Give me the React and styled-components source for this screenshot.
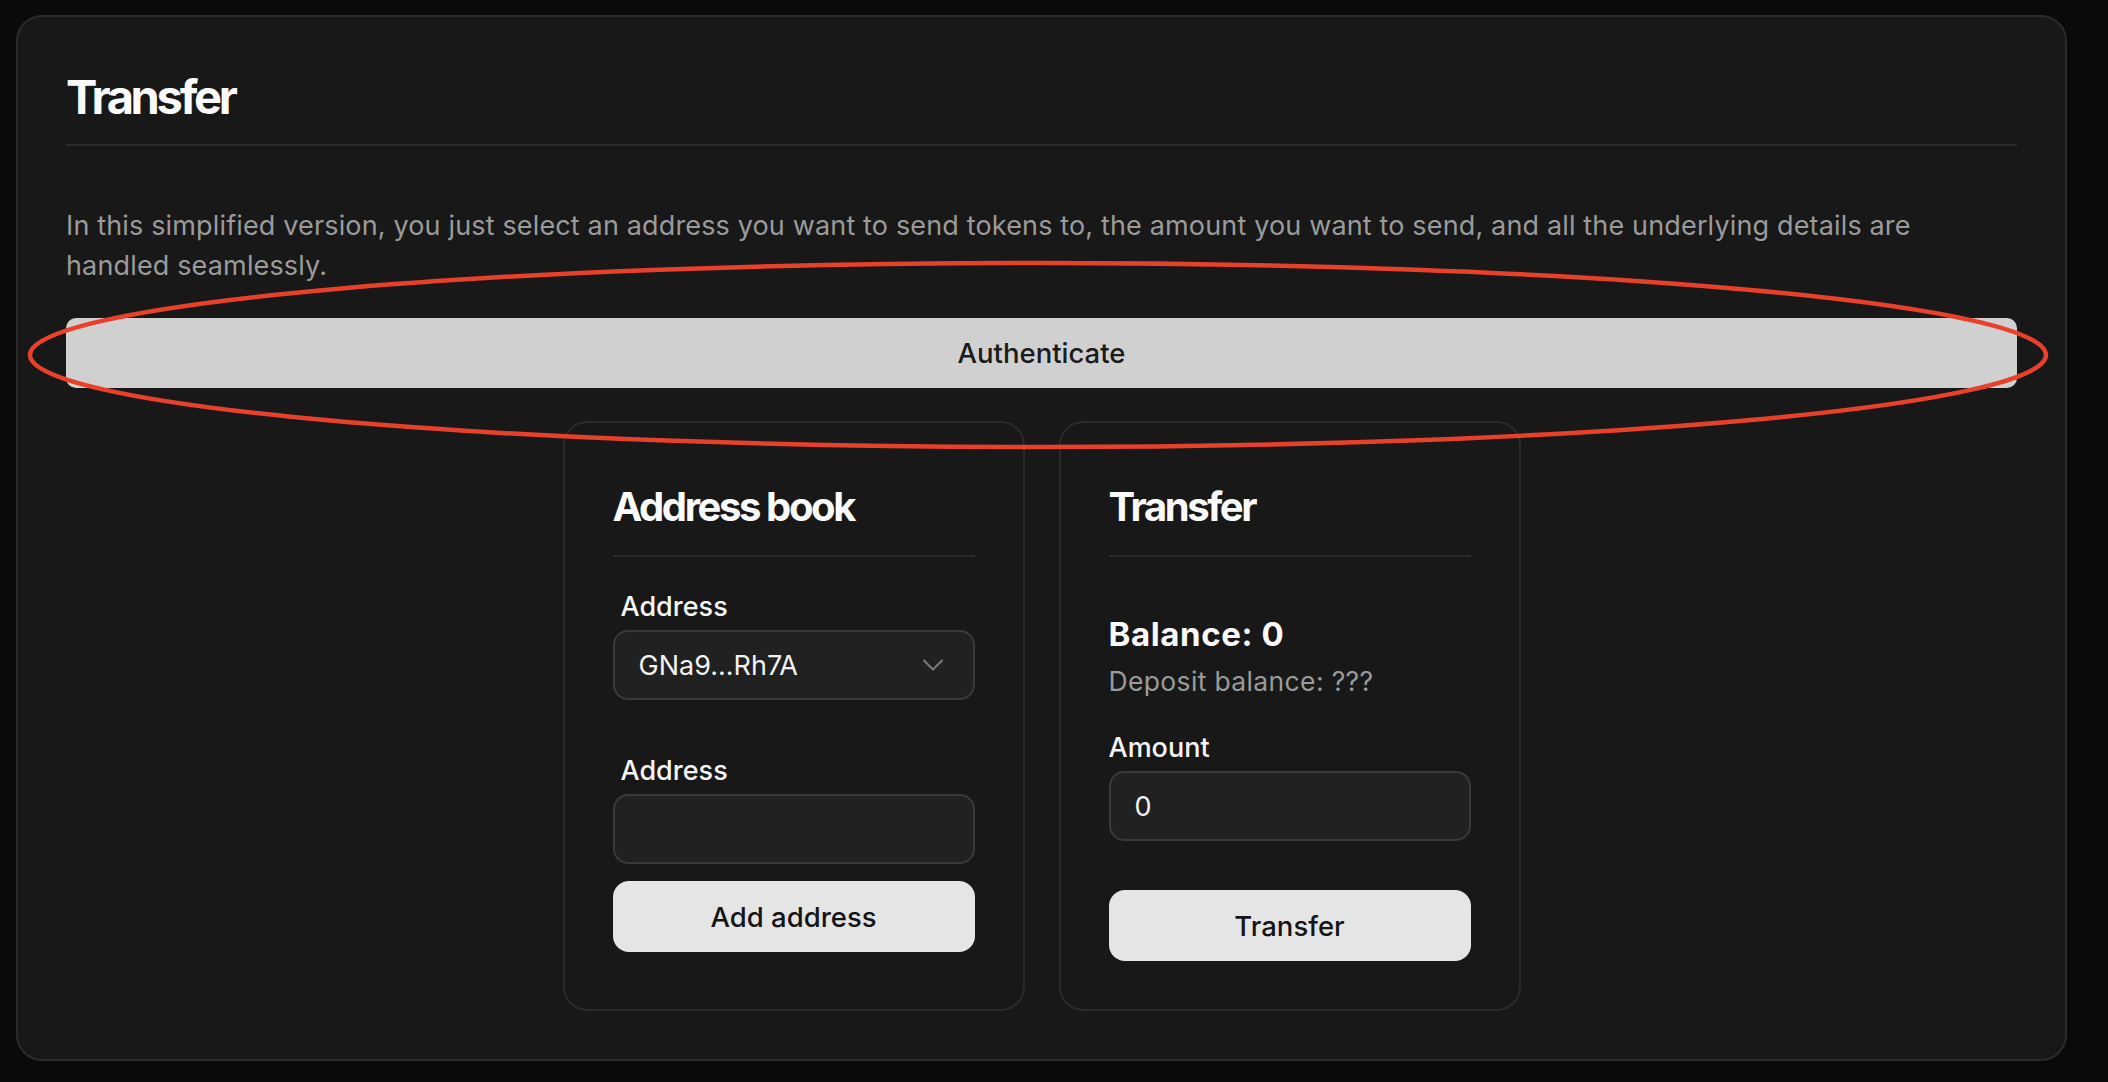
import React from 'react';
import styled, { createGlobalStyle } from 'styled-components';
import { ChevronDown } from 'lucide-react';

const GlobalStyle = createGlobalStyle`
    html, body {
        margin: 0;
        padding: 0;
        background: #0a0a0a;
    }
    body {
        font-family: Inter, "Noto Sans", "Liberation Sans", sans-serif;
        color: #fafafa;
    }
    * {
        box-sizing: border-box;
    }
`;

const Page = styled.div`
    position: relative;
    width: 2108px;
    height: 1082px;
    padding: 15px 41px 21px 16px;
`;

const Panel = styled.section`
    height: 100%;
    background: #181818;
    border: 2px solid #2b2b2b;
    border-radius: 26px;
    padding: 52px 48px 48px;
    display: flex;
    flex-direction: column;
`;

const PageTitle = styled.h1`
    margin: 0;
    font-size: 47px;
    line-height: 56px;
    font-weight: 700;
    letter-spacing: -0.07em;
    padding-bottom: 19px;
    border-bottom: 2px solid #2b2b2b;
`;

const Intro = styled.p`
    margin: 60px 0 0;
    max-width: 1900px;
    font-size: 27px;
    line-height: 40px;
    letter-spacing: 0.15px;
    color: #9b9b9b;
`;

const WideButton = styled.button`
    margin-top: 32px;
    height: 72px;
    width: 100%;
    border: none;
    border-radius: 10px;
    background: #d0d0d0;
    color: #1a1a1a;
    font-family: inherit;
    font-size: 27.5px;
    font-weight: 500;
`;

const Cards = styled.div`
    margin-top: 33px;
    display: flex;
    justify-content: center;
    align-items: stretch;
    gap: 34px;
`;

const Card = styled.div`
    width: 462px;
    border: 2px solid #2b2b2b;
    border-radius: 24px;
    padding: 60px 48px 48px;
    display: flex;
    flex-direction: column;
`;

const CardTitle = styled.h2`
    margin: 0;
    font-size: 40px;
    line-height: 48px;
    font-weight: 700;
    letter-spacing: -0.06em;
    padding-bottom: 24px;
    border-bottom: 2px solid #2b2b2b;
`;

const Label = styled.div`
    margin-top: ${p => p.$top}px;
    padding-left: ${p => (p.$indent ? 8 : 0)}px;
    font-size: 27px;
    line-height: 32px;
    font-weight: 500;
    color: #f5f5f5;
`;

const Field = styled.div`
    margin-top: 7px;
    height: 70px;
    border: 2px solid #3a3a3a;
    border-radius: 15px;
    background: #212121;
    padding: 0 22px 0 24px;
    display: flex;
    align-items: center;
    justify-content: space-between;
    font-size: 27px;
    color: #f2f2f2;
`;

const ActionButton = styled.button`
    margin-top: ${p => p.$top}px;
    height: 71px;
    width: 100%;
    border: none;
    border-radius: 16px;
    background: #e5e5e5;
    color: #151515;
    font-family: inherit;
    font-size: 27.5px;
    font-weight: 500;
`;

const Balance = styled.div`
    margin-top: 57px;
    font-size: 33px;
    line-height: 40px;
    font-weight: 700;
    letter-spacing: 0.6px;
`;

const Deposit = styled.div`
    margin-top: 11px;
    font-size: 26.5px;
    line-height: 32px;
    letter-spacing: 0.35px;
    color: #9b9b9b;
`;

const Annotation = styled.svg`
    position: absolute;
    left: 0;
    top: 0;
    pointer-events: none;
`;

export default function App() {
    return (
        <>
            <GlobalStyle />
            <Page>
                <Panel>
                    <PageTitle>Transfer</PageTitle>
                    <Intro>
                        In this simplified version, you just select an address you want to send tokens to, the amount you want to send, and all the underlying details are handled seamlessly.
                    </Intro>
                    <WideButton>Authenticate</WideButton>
                    <Cards>
                        <Card>
                            <CardTitle>Address book</CardTitle>
                            <Label $top={34} $indent>Address</Label>
                            <Field>
                                <span>GNa9...Rh7A</span>
                                <ChevronDown size={36} strokeWidth={1.4} color="#7a7a7a" />
                            </Field>
                            <Label $top={55} $indent>Address</Label>
                            <Field />
                            <ActionButton $top={17}>Add address</ActionButton>
                        </Card>
                        <Card>
                            <CardTitle>Transfer</CardTitle>
                            <Balance>Balance: 0</Balance>
                            <Deposit>Deposit balance: ???</Deposit>
                            <Label $top={35}>Amount</Label>
                            <Field>0</Field>
                            <ActionButton $top={49}>Transfer</ActionButton>
                        </Card>
                    </Cards>
                </Panel>
                <Annotation width="2108" height="1082">
                    <ellipse cx="1038" cy="355" rx="1008" ry="92" fill="none" stroke="#e8402b" strokeWidth="4.5" />
                </Annotation>
            </Page>
        </>
    );
}
